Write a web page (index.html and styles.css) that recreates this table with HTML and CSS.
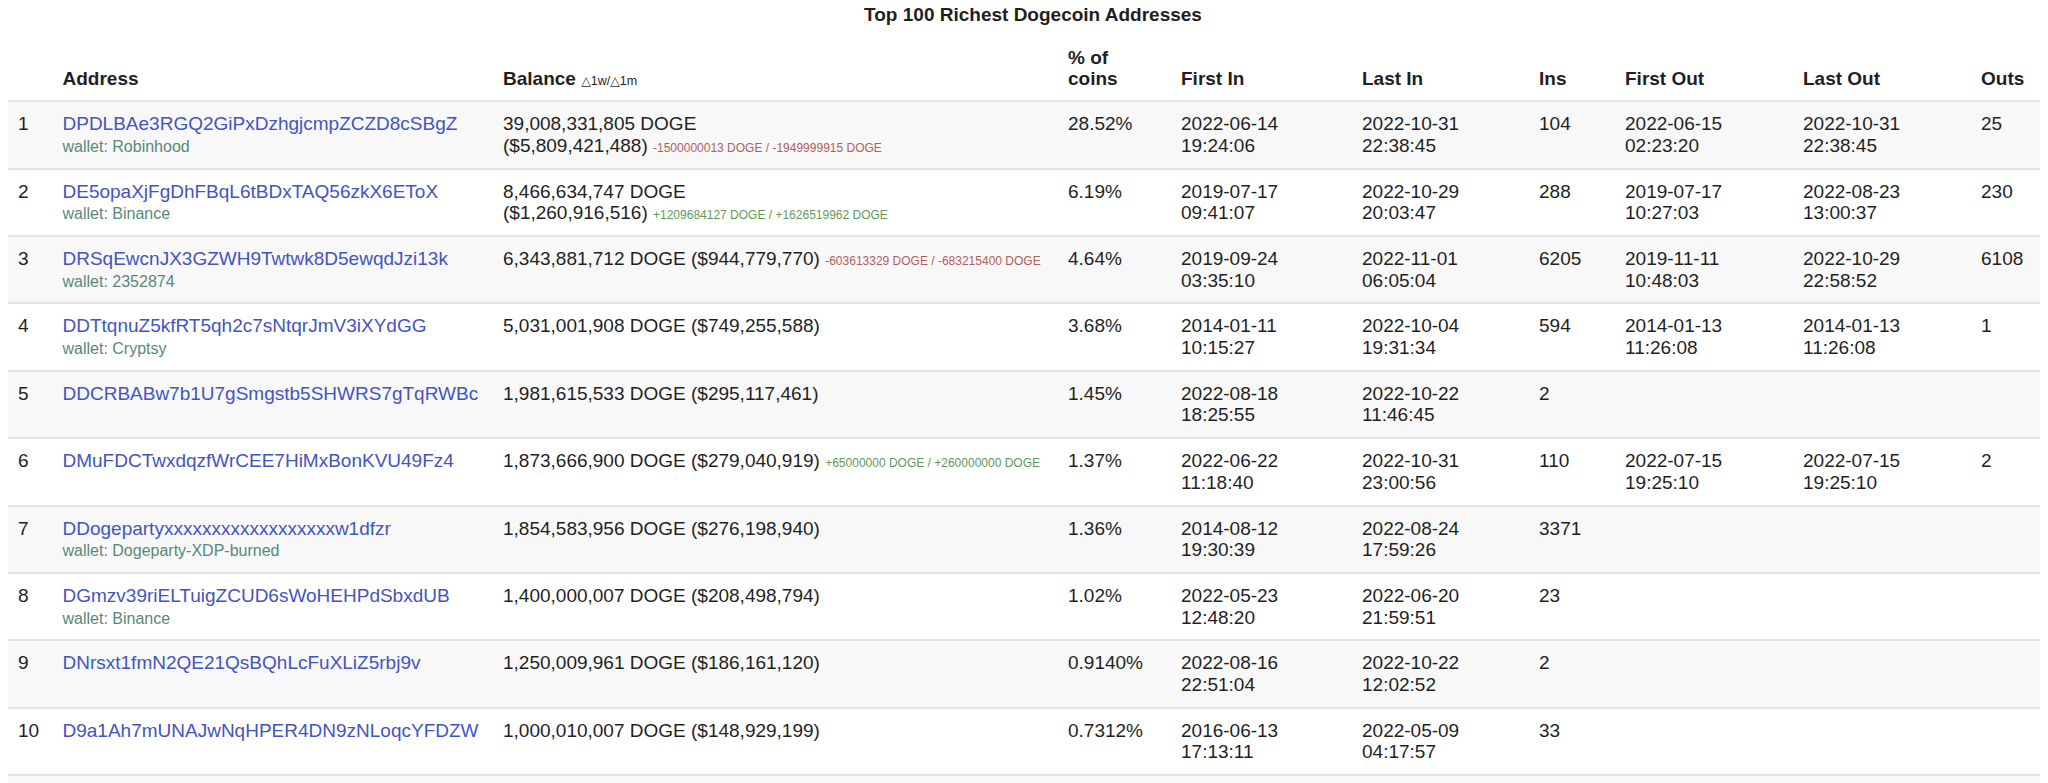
FILE: index.html
```html
<!DOCTYPE html>
<html lang="en">
<head>
<meta charset="utf-8">
<title>Top 100 Richest Dogecoin Addresses</title>
<link rel="stylesheet" href="styles.css">
</head>
<body>
<table class="rich">
  <caption>Top 100 Richest Dogecoin Addresses</caption>
  <colgroup>
    <col class="c-rank"><col class="c-addr"><col class="c-bal"><col class="c-pct">
    <col class="c-date"><col class="c-date2"><col class="c-ins"><col class="c-date3">
    <col class="c-date3"><col class="c-outs">
  </colgroup>
  <thead>
    <tr>
      <th></th>
      <th>Address</th>
      <th>Balance <span class="hint">&#9651;1w/&#9651;1m</span></th>
      <th>% of coins</th>
      <th>First In</th>
      <th>Last In</th>
      <th>Ins</th>
      <th>First Out</th>
      <th>Last Out</th>
      <th>Outs</th>
    </tr>
  </thead>
  <tbody>
    <tr>
      <td>1</td>
      <td><a href="#">DPDLBAe3RGQ2GiPxDzhgjcmpZCZD8cSBgZ</a><br><span class="wallet">wallet: Robinhood</span></td>
      <td>39,008,331,805 DOGE <span class="nw">($5,809,421,488) <span class="delta neg">-1500000013 DOGE / -1949999915 DOGE</span></span></td>
      <td>28.52%</td>
      <td>2022-06-14<br>19:24:06</td>
      <td>2022-10-31<br>22:38:45</td>
      <td>104</td>
      <td>2022-06-15<br>02:23:20</td>
      <td>2022-10-31<br>22:38:45</td>
      <td>25</td>
    </tr>
    <tr>
      <td>2</td>
      <td><a href="#">DE5opaXjFgDhFBqL6tBDxTAQ56zkX6EToX</a><br><span class="wallet">wallet: Binance</span></td>
      <td>8,466,634,747 DOGE <span class="nw">($1,260,916,516) <span class="delta pos">+1209684127 DOGE / +1626519962 DOGE</span></span></td>
      <td>6.19%</td>
      <td>2019-07-17<br>09:41:07</td>
      <td>2022-10-29<br>20:03:47</td>
      <td>288</td>
      <td>2019-07-17<br>10:27:03</td>
      <td>2022-08-23<br>13:00:37</td>
      <td>230</td>
    </tr>
    <tr>
      <td>3</td>
      <td><a href="#">DRSqEwcnJX3GZWH9Twtwk8D5ewqdJzi13k</a><br><span class="wallet">wallet: 2352874</span></td>
      <td>6,343,881,712 DOGE <span class="nw">($944,779,770) <span class="delta neg">-603613329 DOGE / -683215400 DOGE</span></span></td>
      <td>4.64%</td>
      <td>2019-09-24<br>03:35:10</td>
      <td>2022-11-01<br>06:05:04</td>
      <td>6205</td>
      <td>2019-11-11<br>10:48:03</td>
      <td>2022-10-29<br>22:58:52</td>
      <td>6108</td>
    </tr>
    <tr>
      <td>4</td>
      <td><a href="#">DDTtqnuZ5kfRT5qh2c7sNtqrJmV3iXYdGG</a><br><span class="wallet">wallet: Cryptsy</span></td>
      <td>5,031,001,908 DOGE <span class="nw">($749,255,588)</span></td>
      <td>3.68%</td>
      <td>2014-01-11<br>10:15:27</td>
      <td>2022-10-04<br>19:31:34</td>
      <td>594</td>
      <td>2014-01-13<br>11:26:08</td>
      <td>2014-01-13<br>11:26:08</td>
      <td>1</td>
    </tr>
    <tr>
      <td>5</td>
      <td><a href="#">DDCRBABw7b1U7gSmgstb5SHWRS7gTqRWBc</a></td>
      <td>1,981,615,533 DOGE <span class="nw">($295,117,461)</span></td>
      <td>1.45%</td>
      <td>2022-08-18<br>18:25:55</td>
      <td>2022-10-22<br>11:46:45</td>
      <td>2</td>
      <td></td>
      <td></td>
      <td></td>
    </tr>
    <tr>
      <td>6</td>
      <td><a href="#">DMuFDCTwxdqzfWrCEE7HiMxBonKVU49Fz4</a></td>
      <td>1,873,666,900 DOGE <span class="nw">($279,040,919) <span class="delta pos">+65000000 DOGE / +260000000 DOGE</span></span></td>
      <td>1.37%</td>
      <td>2022-06-22<br>11:18:40</td>
      <td>2022-10-31<br>23:00:56</td>
      <td>110</td>
      <td>2022-07-15<br>19:25:10</td>
      <td>2022-07-15<br>19:25:10</td>
      <td>2</td>
    </tr>
    <tr>
      <td>7</td>
      <td><a href="#">DDogepartyxxxxxxxxxxxxxxxxxxw1dfzr</a><br><span class="wallet">wallet: Dogeparty-XDP-burned</span></td>
      <td>1,854,583,956 DOGE <span class="nw">($276,198,940)</span></td>
      <td>1.36%</td>
      <td>2014-08-12<br>19:30:39</td>
      <td>2022-08-24<br>17:59:26</td>
      <td>3371</td>
      <td></td>
      <td></td>
      <td></td>
    </tr>
    <tr>
      <td>8</td>
      <td><a href="#">DGmzv39riELTuigZCUD6sWoHEHPdSbxdUB</a><br><span class="wallet">wallet: Binance</span></td>
      <td>1,400,000,007 DOGE <span class="nw">($208,498,794)</span></td>
      <td>1.02%</td>
      <td>2022-05-23<br>12:48:20</td>
      <td>2022-06-20<br>21:59:51</td>
      <td>23</td>
      <td></td>
      <td></td>
      <td></td>
    </tr>
    <tr>
      <td>9</td>
      <td><a href="#">DNrsxt1fmN2QE21QsBQhLcFuXLiZ5rbj9v</a></td>
      <td>1,250,009,961 DOGE <span class="nw">($186,161,120)</span></td>
      <td>0.9140%</td>
      <td>2022-08-16<br>22:51:04</td>
      <td>2022-10-22<br>12:02:52</td>
      <td>2</td>
      <td></td>
      <td></td>
      <td></td>
    </tr>
    <tr>
      <td>10</td>
      <td><a href="#">D9a1Ah7mUNAJwNqHPER4DN9zNLoqcYFDZW</a></td>
      <td>1,000,010,007 DOGE <span class="nw">($148,929,199)</span></td>
      <td>0.7312%</td>
      <td>2016-06-13<br>17:13:11</td>
      <td>2022-05-09<br>04:17:57</td>
      <td>33</td>
      <td></td>
      <td></td>
      <td></td>
    </tr>
    <tr class="next">
      <td></td><td></td><td></td><td></td><td></td><td></td><td></td><td></td><td></td><td></td>
    </tr>
  </tbody>
</table>
</body>
</html>
```

FILE: styles.css
```css
html, body {
  background: #ffffff;
}

body {
  margin: 0 8px;
  font-family: "Liberation Sans", Arial, Helvetica, sans-serif;
  font-size: 19px;
  line-height: 21.7px;
  color: #1f1f1f;
}

.rich {
  width: 100%;
  table-layout: fixed;
  border-collapse: collapse;
  border-spacing: 0;
}

.rich caption {
  font-weight: bold;
  text-align: center;
  padding: 4px 0 11px 18px;
}

.c-rank  { width: 44.5px; }
.c-addr  { width: 440.5px; }
.c-bal   { width: 565px; }
.c-pct   { width: 113px; }
.c-date  { width: 181px; }
.c-date2 { width: 177px; }
.c-ins   { width: 86px; }
.c-date3 { width: 178px; }
.c-outs  { width: 69px; }

.rich th {
  text-align: left;
  vertical-align: bottom;
  font-weight: bold;
  padding: 10px;
  border-bottom: 2px solid #e3e3e3;
}

.rich td {
  text-align: left;
  vertical-align: top;
  padding: 11px 10px;
  border-bottom: 2px solid #e3e3e3;
}

.rich tbody tr:nth-child(odd) td {
  background: #f8f8f8;
}

.rich tr.next td {
  height: 44px;
}

.hint {
  font-family: "Liberation Sans", "DejaVu Sans", sans-serif;
  font-weight: normal;
  font-size: 12.5px;
  line-height: 1;
}

.rich a {
  color: #4254c4;
  text-decoration: none;
}

.wallet {
  font-size: 16px;
  line-height: 1;
  color: #5a8878;
}

.nw {
  white-space: nowrap;
}

.delta {
  font-size: 12px;
  line-height: 1;
}

.delta.neg {
  color: #b0605a;
}

.delta.pos {
  color: #5f9a57;
}
```
